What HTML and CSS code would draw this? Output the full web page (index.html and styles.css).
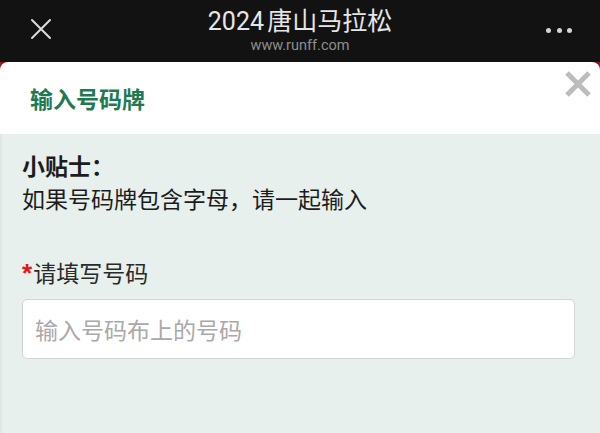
FILE: index.html
```html
<!DOCTYPE html>
<html lang="zh-CN">
<head>
<meta charset="utf-8">
<title>2024唐山马拉松</title>
<link rel="stylesheet" href="styles.css">
</head>
<body>
<div class="topbar">
  <div class="topbar-left">
    <svg class="icon-close" viewBox="0 0 22 22" width="22" height="22"><path d="M2 2 L20 20 M20 2 L2 20" stroke="#dcdcdc" stroke-width="2" fill="none" stroke-linecap="round"/></svg>
  </div>
  <div class="topbar-title">
    <div class="title">2024 唐山马拉松</div>
    <div class="subtitle">www.runff.com</div>
  </div>
  <div class="topbar-right">
    <span class="dot"></span><span class="dot"></span><span class="dot"></span>
  </div>
</div>
<div class="modal">
  <div class="modal-head">
    <h2 class="modal-title">输入号码牌</h2>
    <svg class="modal-close" viewBox="0 0 28 28" width="28" height="28"><path d="M3 3 L25 25 M25 3 L3 25" stroke="#bcbcbc" stroke-width="5" fill="none"/></svg>
  </div>
  <div class="modal-body">
    <div class="tips">
      <div class="tips-head">小贴士：</div>
      <div class="tips-text">如果号码牌包含字母，请一起输入</div>
    </div>
    <label class="field-label"><span class="req">*</span>请填写号码</label>
    <input class="field-input" type="text" placeholder="输入号码布上的号码">
  </div>
</div>
</body>
</html>
```
FILE: styles.css
```css
html, body {
  margin: 0;
  padding: 0;
}
body {
  width: 600px;
  height: 433px;
  overflow: hidden;
  background: #8e1c1c;
  font-family: "Noto Sans CJK SC", "Noto Sans", sans-serif;
}
.topbar {
  height: 62px;
  background: #121212;
  display: grid;
  grid-template-columns: 100px 1fr 100px;
  align-items: center;
}
.topbar-left {
  display: flex;
  align-items: center;
  padding-left: 30px;
  padding-bottom: 4px;
}
.icon-close {
  display: block;
}
.topbar-title {
  text-align: center;
  color: #e6e6e6;
  padding-top: 2px;
}
.title {
  font-family: "Roboto", "Noto Sans CJK SC", sans-serif;
  font-size: 25px;
  line-height: 24px;
  word-spacing: -3px;
}
.subtitle {
  font-family: "Roboto", sans-serif;
  font-size: 14.5px;
  line-height: 16px;
  margin-top: 4px;
  color: #8e8e8e;
}
.topbar-right {
  display: flex;
  justify-content: flex-end;
  align-items: center;
  gap: 5.5px;
  padding-right: 28px;
  padding-bottom: 2px;
}
.dot {
  width: 5px;
  height: 5px;
  border-radius: 50%;
  background: #d4d4d4;
}
.modal {
  position: relative;
  height: 371px;
  background: #ffffff;
  border-radius: 8px 8px 0 0;
  overflow: hidden;
}
.modal-head {
  height: 72px;
  display: flex;
  align-items: center;
  padding-left: 30px;
}
.modal-title {
  margin: 0;
  font-size: 23px;
  font-weight: 700;
  color: #1f7a52;
  line-height: 30px;
}
.modal-close {
  position: absolute;
  top: 8px;
  right: 8px;
}
.modal-body {
  height: 299px;
  background: #e7f0ed;
  border-left: 2px solid #dde7e3;
  padding: 15px 25px 0 20px;
  color: #1c1c1c;
}
.tips {
  font-size: 23px;
  line-height: 33px;
}
.tips-head {
  font-weight: 700;
}
.field-label {
  display: block;
  margin-top: 41px;
  font-size: 23px;
  line-height: 33px;
  color: #2a2a2a;
}
.req {
  color: #e01818;
  font-family: "Liberation Sans", sans-serif;
  font-size: 26px;
  font-weight: 700;
  margin-right: 1px;
}
.field-input {
  display: block;
  box-sizing: border-box;
  margin-top: 9px;
  width: 553px;
  height: 60px;
  border: 1.5px solid #d2d6d5;
  border-radius: 5px;
  background: #ffffff;
  padding: 0 12px;
  font-family: "Noto Sans CJK SC", "Noto Sans", sans-serif;
  font-size: 23px;
  outline: none;
}
.field-input::placeholder {
  color: #a9a9a9;
}
```
